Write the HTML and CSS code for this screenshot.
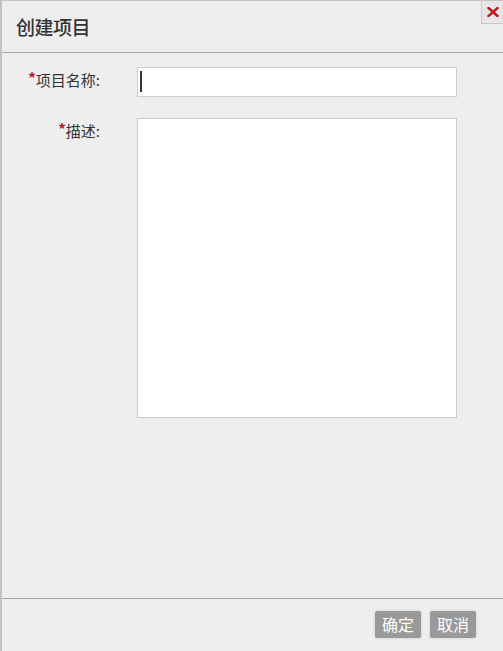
FILE: index.html
```html
<!DOCTYPE html>
<html lang="zh-CN">
<head>
    <meta charset="UTF-8">
    <meta name="viewport" content="width=device-width, initial-scale=1.0">
    <title>创建项目</title>
    <link rel="stylesheet" href="styles.css">
</head>
<body>
    <div class="dialog">
        <div class="dialog-header">
            <h2 class="dialog-title">创建项目</h2>
            <a href="#" class="close-btn" title="关闭">
                <svg width="12" height="10" viewBox="0 0 12 10">
                    <path d="M1.5 1 L10.5 9 M10.5 1 L1.5 9" stroke="#c4161c" stroke-width="2.4" stroke-linecap="square"/>
                </svg>
            </a>
        </div>

        <form class="dialog-body" id="projectForm">
            <div class="form-row">
                <label for="projectName"><span class="required">*</span>项目名称:</label>
                <div class="field">
                    <input type="text" id="projectName">
                    <span class="caret"></span>
                </div>
            </div>

            <div class="form-row">
                <label for="description"><span class="required">*</span>描述:</label>
                <div class="field">
                    <textarea id="description"></textarea>
                </div>
            </div>
        </form>

        <div class="dialog-footer">
            <button type="submit" form="projectForm" class="btn">确定</button>
            <button type="button" class="btn">取消</button>
        </div>
    </div>
</body>
</html>
```

FILE: styles.css
```css
* {
    margin: 0;
    padding: 0;
    box-sizing: border-box;
}

body {
    font-family: "Noto Sans CJK SC", "Liberation Sans", sans-serif;
    background: #eeeeee;
    color: #333;
}

.dialog {
    position: relative;
    display: flex;
    flex-direction: column;
    height: 651px;
    background: #eeeeee;
    border-left: 2px solid #c2c2c2;
    border-top: 1px solid #c6c6c6;
}

.dialog-header {
    height: 52px;
    display: flex;
    align-items: center;
    padding-left: 14px;
    border-bottom: 1px solid #a3a3a3;
}

.dialog-title {
    font-size: 19px;
    font-weight: 500;
    color: #333;
    letter-spacing: -0.5px;
}

.close-btn {
    position: absolute;
    top: 0;
    right: 0;
    width: 22px;
    height: 23px;
    display: flex;
    align-items: center;
    justify-content: center;
    background: #e6e6e6;
    border-left: 1px solid #c8c8c8;
    border-bottom: 1px solid #c8c8c8;
}

.dialog-body {
    flex: 1;
    padding-top: 14px;
}

.form-row {
    display: flex;
    align-items: flex-start;
    margin-bottom: 21px;
}

.form-row label {
    width: 98px;
    text-align: right;
    font-size: 15px;
    line-height: 26px;
    color: #333;
    margin-right: 37px;
}

.required {
    color: #b5161c;
    font-size: 15px;
    font-weight: bold;
    vertical-align: top;
    line-height: 22px;
}

.field {
    position: relative;
}

input, textarea {
    display: block;
    width: 320px;
    border: 1px solid #cccccc;
    background: #fff;
    font-family: inherit;
    font-size: 14px;
    outline: none;
}

input {
    height: 30px;
    padding: 0 4px;
}

textarea {
    height: 300px;
    resize: none;
}

.caret {
    position: absolute;
    left: 3px;
    top: 4px;
    width: 2px;
    height: 21px;
    background: #333;
}

.dialog-footer {
    height: 53px;
    display: flex;
    justify-content: flex-end;
    align-items: flex-start;
    gap: 9px;
    padding: 12px 27px 0 0;
    border-top: 1px solid #a3a3a3;
}

.btn {
    height: 27px;
    padding: 0 7px;
    font-family: inherit;
    font-size: 16px;
    line-height: 27px;
    color: #fff;
    background: #999999;
    border: none;
    border-radius: 2px;
    box-shadow: 0 0 3px rgba(0, 0, 0, 0.15);
    cursor: pointer;
}
```
